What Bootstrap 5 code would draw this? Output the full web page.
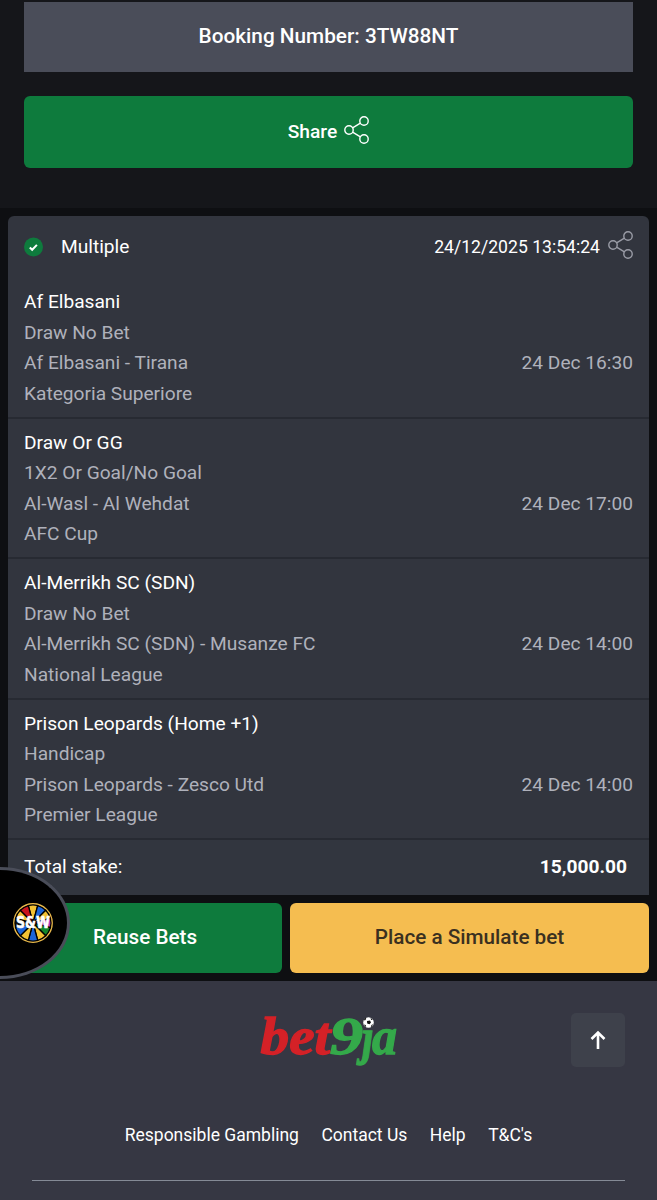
<!DOCTYPE html>
<html lang="en" data-bs-theme="dark">
<head>
<meta charset="utf-8">
<meta name="viewport" content="width=device-width, initial-scale=1">
<title>Booking</title>
<link rel="stylesheet" href="https://cdn.jsdelivr.net/npm/bootstrap@5.3.0/dist/css/bootstrap.min.css">
<style>
html,body{height:1200px;overflow:hidden}
body{font-family:Roboto,"Liberation Sans",sans-serif;font-size:19.15px;line-height:30.5px;background:#0e0f12;color:#fff}
.booking{height:208px;background:#15161a;padding:2px 24px 0}
.booking-no{height:70px;padding-bottom:2px;background:#4a4d59;font-weight:500;font-size:20.75px}
.btn-flat{--bs-btn-font-size:20.7px;--bs-btn-font-weight:500;--bs-btn-border-width:0;--bs-btn-border-radius:6px;--bs-btn-padding-y:0;--bs-btn-color:#fff;--bs-btn-bg:#0e7b3d}
.btn-gold{--bs-btn-color:#3a3020;--bs-btn-bg:#f5bd50}
.share-btn{height:72px;margin-top:24px;font-size:19.2px;gap:7px}
.share-icon{margin-top:-5px}
.slip{margin:8px 8px 0;background:#32353e;border-radius:6px 6px 0 0;height:679px}
.slip-head{height:62px;padding:0 16px}
.slip-kind{margin-left:17px}
.stamp{font-size:17.6px}
.leg{height:140.5px;padding:9px 16px 0;border-bottom:2px solid #272a32;color:#afb1bb}
.total{height:55px;padding:0 22px 0 16px;background:#32363f}
.actions{padding:8px 8px 0;height:86px}
.actions .btn{height:70px}
.reuse{width:274px}
.foot{height:219px;background:#363743}
.logo{left:240px;top:19px}
.top-btn{left:571px;top:32px;width:54px;height:54px;background:#3e414b;border-radius:5px}
.links{padding-top:139px;gap:22.5px;font-size:17.5px}
.rule{margin:29px 24px 0 32px;height:1.5px;background:#858a96;width:593px}
.bubble{left:0;top:867px;width:70px;height:112px;background:#000;border:3px solid #4a4d59;border-left:0;border-radius:0 70px 70px 0/0 56px 56px 0}
</style>
</head>
<body class="position-relative">
<section class="booking">
  <div class="booking-no d-flex align-items-center justify-content-center">Booking Number: 3TW88NT</div>
  <button class="btn btn-flat share-btn w-100 d-flex align-items-center justify-content-center">Share
    <svg class="share-icon" width="25" height="28" viewBox="0 0 25 28" fill="none" stroke="#fff" stroke-width="1.4"><circle cx="5" cy="14" r="4.2"/><circle cx="20" cy="5" r="4.2"/><circle cx="20" cy="23" r="4.2"/><path d="M8.6 11.8 16.4 7.2M8.6 16.2l7.8 4.6"/></svg>
  </button>
</section>
<main class="slip">
  <header class="slip-head d-flex align-items-center">
    <svg width="20" height="20" viewBox="0 0 20 20"><circle cx="9.500" cy="10" r="9.500" fill="#0e7b3d"/><path d="m5.800 10.500 2.400 2.300 4.700-4.900" fill="none" stroke="#fff" stroke-width="2"/></svg>
    <span class="flex-grow-1 slip-kind">Multiple</span>
    <span class="stamp">24/12/2025 13:54:24</span>
    <svg class="share-icon ms-2" width="25" height="28" viewBox="0 0 25 28" fill="none" stroke="#9a9ca6" stroke-width="1.4"><circle cx="5" cy="14" r="4.2"/><circle cx="20" cy="5" r="4.2"/><circle cx="20" cy="23" r="4.2"/><path d="M8.6 11.8 16.4 7.2M8.6 16.2l7.8 4.6"/></svg>
  </header>
  <article class="leg"><div class="text-white">Af Elbasani</div><div>Draw No Bet</div><div class="d-flex justify-content-between"><span>Af Elbasani - Tirana</span><span>24 Dec 16:30</span></div><div>Kategoria Superiore</div></article>
  <article class="leg"><div class="text-white">Draw Or GG</div><div>1X2 Or Goal/No Goal</div><div class="d-flex justify-content-between"><span>Al-Wasl - Al Wehdat</span><span>24 Dec 17:00</span></div><div>AFC Cup</div></article>
  <article class="leg"><div class="text-white">Al-Merrikh SC (SDN)</div><div>Draw No Bet</div><div class="d-flex justify-content-between"><span>Al-Merrikh SC (SDN) - Musanze FC</span><span>24 Dec 14:00</span></div><div>National League</div></article>
  <article class="leg"><div class="text-white">Prison Leopards (Home +1)</div><div>Handicap</div><div class="d-flex justify-content-between"><span>Prison Leopards - Zesco Utd</span><span>24 Dec 14:00</span></div><div>Premier League</div></article>
  <div class="total d-flex align-items-center justify-content-between"><span>Total stake:</span><strong>15,000.00</strong></div>
</main>
<div class="actions d-flex gap-2">
  <button class="btn btn-flat reuse">Reuse Bets</button>
  <button class="btn btn-flat btn-gold flex-grow-1">Place a Simulate bet</button>
</div>
<footer class="foot position-relative">
  <svg class="logo position-absolute" width="180" height="75" viewBox="0 0 180 75" font-family="'Liberation Serif',serif" font-weight="700" font-style="italic" stroke-width="1.3">
    <text x="20.500" y="53.500" font-size="53" textLength="70" lengthAdjust="spacingAndGlyphs" fill="#d42127" stroke="#d42127">bet</text>
    <g fill="#34a94a" stroke="#34a94a"><text x="90" y="54" font-size="52" textLength="33" lengthAdjust="spacingAndGlyphs">9</text>
    <text transform="translate(122 53.500) scale(.82 1)" font-size="50">ȷ</text>
    <text x="132" y="53.500" font-size="53" textLength="25" lengthAdjust="spacingAndGlyphs">a</text></g>
    <g stroke="none"><circle cx="128.500" cy="22.500" r="5.300" fill="#fff"/><path d="m127 21 3-.5 1 2-1.500 1.800-2.300-.8zM124 19.500l1.500-1.700.8 1-1.500 2zM130.500 17.700l2.300 2-1.600.2zM124 24.500l1.700.5.5 2-1.400-.8zM131.500 25l1.500-1-1 2.500-1.300.7z" fill="#111"/></g>
  </svg>
  <a class="top-btn position-absolute d-flex align-items-center justify-content-center" href="#"><svg width="16" height="20" viewBox="0 0 16 20" fill="none" stroke="#fff" stroke-width="2.600"><path d="M8 19V2.500M1.500 9 8 2.500 14.500 9"/></svg></a>
  <nav class="links d-flex justify-content-center"><span>Responsible Gambling</span><span>Contact Us</span><span>Help</span><span>T&amp;C's</span></nav>
  <div class="rule"></div>
</footer>
<div class="bubble position-absolute">
  <svg width="66" height="106" viewBox="0 0 66 106">
    <g transform="translate(33 53)">
      <circle r="19" fill="#111" stroke="#e9b94b" stroke-width="1.800"/>
      <g stroke="#000" stroke-width="1.300">
        <path d="M0 0-4.700-17.400A18 18 0 0 1 4.700-17.400Z" fill="#f3c234"/><path d="M0 0 4.700-17.400A18 18 0 0 1 12.700-12.700Z" fill="#1b64d8"/><path d="M0 0 12.700-12.700A18 18 0 0 1 17.400-4.700Z" fill="#f3c234"/><path d="M0 0 17.400-4.700A18 18 0 0 1 17.400 4.700Z" fill="#b637b8"/><path d="M0 0 17.400 4.700A18 18 0 0 1 12.700 12.700Z" fill="#14862b"/><path d="M0 0 12.700 12.700A18 18 0 0 1 4.700 17.400Z" fill="#f3c234"/><path d="M0 0 4.700 17.400A18 18 0 0 1-4.700 17.400Z" fill="#1b64d8"/><path d="M0 0-4.700 17.400A18 18 0 0 1-12.700 12.700Z" fill="#f3c234"/><path d="M0 0-12.700 12.700A18 18 0 0 1-17.400 4.700Z" fill="#1b64d8"/><path d="M0 0-17.400 4.700A18 18 0 0 1-17.400-4.700Z" fill="#111"/><path d="M0 0-17.400-4.700A18 18 0 0 1-12.700-12.700Z" fill="#f3c234"/><path d="M0 0-12.700-12.700A18 18 0 0 1-4.700-17.400Z" fill="#c9141c"/>
      </g>
      <text x="-17" y="5" font-family="'DejaVu Sans',sans-serif" font-size="15" font-weight="700" textLength="34" lengthAdjust="spacingAndGlyphs" fill="#fff" stroke="#fff" stroke-width=".6">S&amp;W</text>
    </g>
  </svg>
</div>
<script src="https://cdn.jsdelivr.net/npm/bootstrap@5.3.0/dist/js/bootstrap.bundle.min.js"></script>
</body>
</html>
